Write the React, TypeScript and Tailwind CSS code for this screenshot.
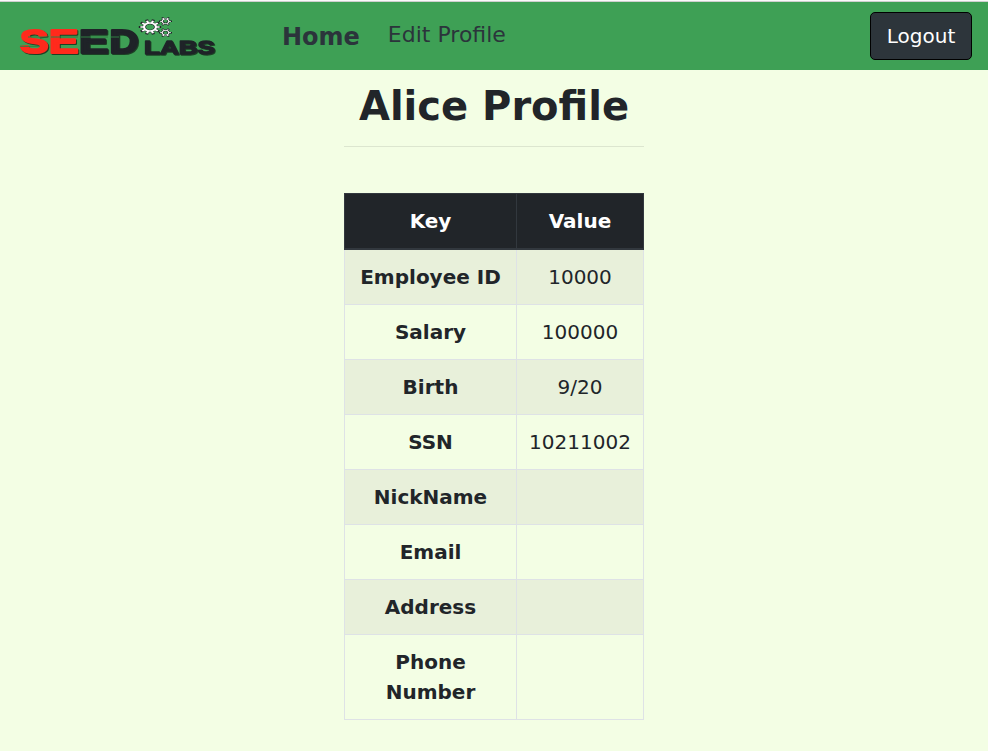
const rows: [string, string][] = [
  ['Employee ID', '10000'],
  ['Salary', '100000'],
  ['Birth', '9/20'],
  ['SSN', '10211002'],
  ['NickName', ''],
  ['Email', ''],
  ['Address', ''],
  ['Phone Number', ''],
];

const letters: { char: string; x: number; width: number; color: string }[] = [
  { char: 'S', x: 20, width: 28.5, color: '#ff2a1c' },
  { char: 'E', x: 49, width: 29.5, color: '#ff2a1c' },
  { char: 'E', x: 79, width: 29.5, color: '#1f2328' },
  { char: 'D', x: 109.5, width: 29, color: '#1f2328' },
];

function Gear({ x, y, rx, ry, teeth, w }: { x: number; y: number; rx: number; ry: number; teeth: number; w: number }) {
  const inner = rx * 0.62;
  const spokes = Array.from({ length: teeth }, (_, i) => {
    const a = (i * 2 * Math.PI) / teeth;
    return `M${inner * Math.cos(a)} ${inner * Math.sin(a)}L${rx * Math.cos(a)} ${rx * Math.sin(a)}`;
  }).join('');
  return (
    <g transform={`translate(${x} ${y}) scale(1 ${ry / rx})`} fill="none">
      <g stroke="#1f2328" strokeWidth={w + 1.4}>
        <path d={spokes} strokeLinecap="square" strokeWidth={w + 1} />
        <circle r={inner} />
      </g>
      <g stroke="#fff" strokeWidth={w}>
        <path d={spokes} />
        <circle r={inner} />
      </g>
    </g>
  );
}

function Logo() {
  return (
    <svg
      width="228"
      height="68"
      viewBox="0 2 228 68"
      className="block font-['Liberation_Sans',sans-serif] font-bold"
      role="img"
      aria-label="SEED Labs"
    >
      <g className="[filter:drop-shadow(1px_1px_0.7px_rgba(20,40,25,0.8))]" strokeLinejoin="round">
        {letters.map(({ char, x, width, color }) => (
          <text key={x} x={x} y="53" fontSize="33" textLength={width} lengthAdjust="spacingAndGlyphs" fill={color} stroke={color} strokeWidth="2.2">
            {char}
          </text>
        ))}
        <text x="144" y="53.8" fontSize="19" textLength="71" lengthAdjust="spacingAndGlyphs" fill="#1f2328" stroke="#1f2328" strokeWidth="1.3">LABS</text>
      </g>
      <g stroke="#317e43" strokeWidth="1">
        <path d="M28 37h20M20 46.3h20M51 37h27M81 37h27M111 37h8" />
      </g>
      <Gear x={150} y={27} rx={9.6} ry={6.6} teeth={10} w={2.2} />
      <Gear x={165.5} y={21.3} rx={5.4} ry={3.8} teeth={6} w={1.2} />
      <Gear x={165.5} y={32.7} rx={5.4} ry={3.8} teeth={6} w={1.2} />
    </svg>
  );
}

export default function App() {
  return (
    <div className="min-h-screen bg-[#f3fee4] font-['DejaVu_Sans',sans-serif] text-xl leading-[30px] text-[#212529]">
      <div className="h-0.5 border-b border-[#cfcfcf] bg-[#fafafa]" />
      <nav className="flex h-[68px] items-start bg-[#3ea055] pr-4 text-[#2b343b]">
        <Logo />
        <a className="mt-5 ml-[54px] text-[24px] leading-[30px] font-bold">Home</a>
        <a className="mt-[18px] ml-7 text-[22px] leading-[30px]">Edit Profile</a>
        <button className="mt-2.5 ml-auto h-12 w-[102px] rounded-[5px] border border-black bg-[#2d353b] text-xl text-white">
          Logout
        </button>
      </nav>
      <main className="mx-auto w-[300px]">
        <h1 className="pt-3 text-center text-[40px] leading-[48px] font-bold whitespace-nowrap">Alice Profile</h1>
        <hr className="mt-4 mb-[46px] border-t border-[#dce6cf]" />
        <table className="w-[300px] table-fixed border-collapse text-center">
          <colgroup>
            <col className="w-[172px]" />
            <col className="w-[127px]" />
          </colgroup>
          <thead>
            <tr className="bg-[#212529] text-white">
              <th className="border border-b-2 border-[#32383e] p-3">Key</th>
              <th className="border border-b-2 border-[#32383e] p-3">Value</th>
            </tr>
          </thead>
          <tbody>
            {rows.map(([key, value]) => (
              <tr key={key} className="odd:bg-[#e8f0da]">
                <th className="border border-[#dee2e6] p-3">{key}</th>
                <td className="border border-[#dee2e6] p-3">{value}</td>
              </tr>
            ))}
          </tbody>
        </table>
      </main>
    </div>
  );
}
